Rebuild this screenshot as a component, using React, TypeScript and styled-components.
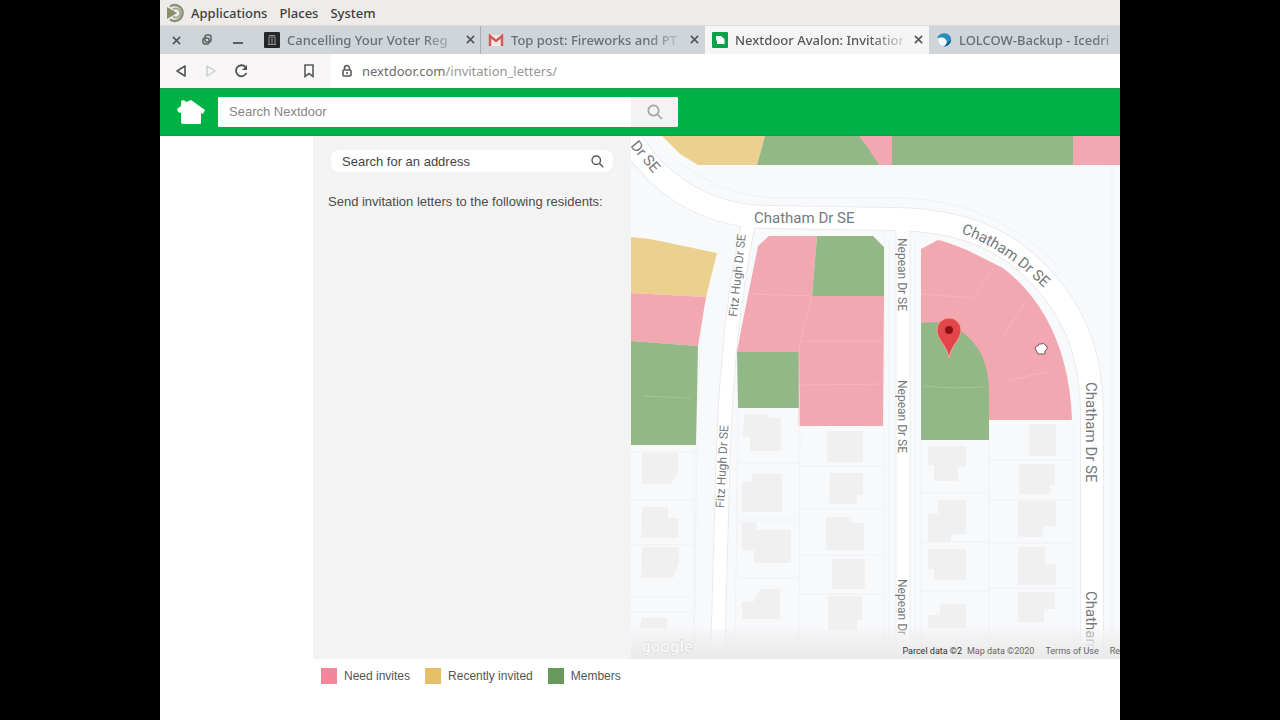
import { useState } from "react";
import styled, { createGlobalStyle } from "styled-components";

const GlobalStyle = createGlobalStyle`
  * {
    box-sizing: border-box;
  }

  body {
    margin: 0;
    background-color: #000;
    font-family: "Liberation Sans", Arial, sans-serif;
  }

  button {
    padding: 0;
    border: 0;
    background: none;
  }
`;

const Screen = styled.div`
  height: 100vh;
  aspect-ratio: 4 / 3;
  max-width: 100%;
  margin: 0 auto;
  overflow: hidden;

  display: flex;
  flex-direction: column;

  background-color: #fff;
`;

const MenuBar = styled.nav`
  height: 26px;
  flex-shrink: 0;
  padding-left: 5px;

  display: flex;
  align-items: center;
  gap: 5px;

  background-color: #edecea;
  border-bottom: 1px solid #dcdcdb;
`;

const MenuButton = styled.button`
  margin-right: 7px;

  color: #3e3e3e;
  font: 500 13px "Noto Sans", sans-serif;
`;

const TabBar = styled.div`
  height: 28px;
  flex-shrink: 0;

  display: flex;

  background-color: #d0d5d9;
`;

const WindowButtons = styled.div`
  width: 97px;
  flex-shrink: 0;
  padding-left: 8px;

  display: flex;
  align-items: center;
  gap: 15px;
`;

const IconButton = styled.button`
  width: 16px;
  height: 16px;
  flex-shrink: 0;

  display: flex;
  align-items: center;
  justify-content: center;
`;

const Tab = styled.div<{ $active?: boolean; $divider?: boolean }>`
  width: 224px;
  flex-shrink: 0;
  padding: 0 2px 1px 7px;

  display: flex;
  align-items: center;
  gap: 7px;

  background-color: ${({ $active }) => ($active ? "#f5f5f6" : "transparent")};
  border-right: 1px solid ${({ $divider }) => ($divider ? "#a9aeb2" : "transparent")};
`;

const TabTitle = styled.button<{ $active?: boolean }>`
  flex: 1;
  min-width: 0;

  color: ${({ $active }) => ($active ? "#55585a" : "#696e72")};
  font: 500 13px "Noto Sans", sans-serif;
  text-align: left;
  white-space: nowrap;

  mask-image: linear-gradient(to right, #000 80%, transparent 105%);
`;

const Toolbar = styled.div`
  height: 34px;
  flex-shrink: 0;
  padding-left: 13px;

  display: flex;
  align-items: center;
  gap: 14px;

  background-color: #f8f6f6;
`;

const BookmarkButton = styled(IconButton)`
  margin-left: 38px;
`;

const AddressBar = styled.div`
  height: 100%;
  flex: 1;
  padding-left: 8px;

  display: flex;
  align-items: center;
  gap: 7px;

  background-color: #fff;
`;

const Url = styled.span`
  color: #969696;
  font: 13px "Noto Sans", sans-serif;
`;

const Host = styled.span`
  color: #6c6c6c;
`;

const SiteHeader = styled.header`
  height: 48px;
  flex-shrink: 0;
  padding: 0 16px 1px;

  display: flex;
  align-items: center;
  gap: 12px;

  background-color: #00b246;
  border-top: 1px solid #1a9f4d;
  border-bottom: 1px solid #109f48;
`;

const HomeLink = styled.a`
  display: flex;
`;

const SiteSearch = styled.form`
  width: 460px;
  height: 30px;

  display: flex;

  background-color: #fff;
  border-radius: 2px;
  overflow: hidden;
`;

const SiteSearchInput = styled.input`
  flex: 1;
  min-width: 0;
  padding: 0 11px;

  border: 0;
  outline: 0;

  font: 13px "Liberation Sans", Arial, sans-serif;

  &::placeholder {
    color: #868686;
  }
`;

const SiteSearchButton = styled.button`
  width: 47px;

  display: flex;
  align-items: center;
  justify-content: center;

  background-color: #f3f3f3;
`;

const Main = styled.main`
  flex: 1;
  min-height: 0;
  margin-left: 153px;

  display: flex;
  flex-direction: column;
`;

const Workspace = styled.div`
  flex: 1;
  min-height: 0;

  display: flex;
`;

const SidePanel = styled.section`
  width: 318px;
  flex-shrink: 0;
  padding: 14px 15px;

  background-color: #f3f3f3;
`;

const AddressSearch = styled.form`
  width: 282px;
  height: 22px;
  margin-left: 3px;
  padding: 0 8px 0 11px;

  display: flex;
  align-items: center;

  background-color: #fff;
  border-radius: 8px;
`;

const AddressInput = styled.input`
  flex: 1;
  min-width: 0;
  padding: 0;

  border: 0;
  outline: 0;
  background: none;

  font: 13px "Liberation Sans", Arial, sans-serif;

  &::placeholder {
    color: #444;
  }
`;

const PanelText = styled.p`
  margin: 22px 0 0;

  color: #4c4c4c;
  font-size: 13px;
  line-height: 16px;
  white-space: nowrap;
`;

const MapPanel = styled.section`
  position: relative;
  flex: 1;
  min-width: 0;
  overflow: hidden;

  background-color: #f8f9fb;
`;

const MapSvg = styled.svg`
  display: block;
  width: 100%;
  height: 100%;
`;

const StreetLabel = styled.text<{ $size: number }>`
  fill: #77797c;
  font-family: Roboto, sans-serif;
  font-size: ${({ $size }) => $size}px;
`;

const Watermark = styled.text`
  fill: #f9f9f9;
  stroke: #d3d3d3;
  stroke-width: 1px;
  paint-order: stroke;
  font: 500 17px Roboto, sans-serif;
`;

const Attribution = styled.div`
  position: absolute;
  right: 0;
  bottom: 0;
  height: 16px;

  display: flex;
  gap: 11px;

  color: #666;
  font: 9px/16px Roboto, sans-serif;
  white-space: nowrap;
`;

const ParcelCredit = styled.span`
  margin-right: -6px;

  color: #333;
`;

const AttributionLink = styled.a`
  color: inherit;
  text-decoration: none;
`;

const Legend = styled.ul`
  height: 61px;
  margin: 0;
  padding: 9px 0 0 8px;

  display: flex;
  gap: 15px;

  list-style: none;
`;

const LegendItem = styled.li`
  height: 16px;

  display: flex;
  align-items: center;
  gap: 7px;

  color: #555;
  font-size: 12px;
`;

const Swatch = styled.span<{ $color: string }>`
  width: 16px;
  height: 16px;

  background-color: ${({ $color }) => $color};
`;

const PINK = "#f2a8b1";
const GREEN = "#93b887";
const YELLOW = "#ebd08f";

const parcels = [
  { fill: YELLOW, points: "662,136 765,136 757,165 698,165 680,154" },
  { fill: PINK, points: "856,136 893,136 893,165 878,165" },
  { fill: GREEN, points: "765,136 859,136 868,148 879,165 757,165" },
  { fill: GREEN, points: "892,136 1073,136 1073,165 892,165" },
  { fill: PINK, points: "1073,136 1140,136 1140,165 1073,165" },
  { fill: YELLOW, points: "631,237 650,239 717,253 706,297 631,293" },
  { fill: PINK, points: "631,293 706,297 698,346 631,341" },
  { fill: GREEN, points: "631,341 698,346 696,445 631,445" },
  { fill: PINK, points: "769,236 817,236 812,296 884,296 883,426 800,426 799,352 737,352 742,325 758,246" },
  { fill: GREEN, points: "817,236 873,236 884,247 884,296 812,296" },
  { fill: GREEN, points: "737,352 799,352 799,408 738,408" },
];

const lotLines = [
  "M752 294L812 296",
  "M812 296L803 330L799 352V426",
  "M803 341H884",
  "M800 385L884 384",
  "M994 268L973 298L922 294",
  "M1025 302L1004 335",
  "M1006 381L1046 372",
];

const borders = [
  "M631 452H700M631 500H700M631 545H695M631 597H692M631 612H692",
  "M697 445L694 660",
  "M703 300L694 460V660",
  "M738 408L735 660M800 426L799 660",
  "M738 463H799M738 520H799M738 578H799M800 466H884M800 509H884M800 555H884M800 594H884",
  "M884 230V660M889 240V660M915 240V660M921 440V660",
  "M989 420V660M1074 420V660M1112 165V660",
  "M921 493H988M921 542H988M921 591H988M989 460H1074M989 500H1074M989 543H1074M989 588H1074",
];

const houses = [
  "M642 453H678V472L670 484H642Z",
  "M642 507H668V518H678V538H641Z",
  "M642 547H679V562L673 578H641Z",
  "M642 618H667V628H640Z",
  "M745 414H769V418H781V451H750V437H742Z",
  "M742 482H752V474H782V512H742Z",
  "M742 522H757V530H791V563H754V550H742Z",
  "M760 589H780V619H742V602H753Z",
  "M827 431H863V462H827Z",
  "M830 473H863V495H857V504H829Z",
  "M826 517H851V523H864V550H826Z",
  "M832 559H865V589H832Z",
  "M828 596H862V620H857V630H828Z",
  "M928 446H966V467H958V481H934V465H928Z",
  "M938 500H966V534H951V542H928V514H938Z",
  "M928 549H966V580H934V569H928Z",
  "M940 604H966V628H928V615H940Z",
  "M1029 424H1056V456H1029Z",
  "M1019 464H1055V485H1050V494H1019Z",
  "M1018 501H1056V526H1043V537H1018Z",
  "M1018 547H1045V564H1056V585H1018Z",
  "M1018 592H1055V609H1044V622H1018Z",
];

const CHATHAM = "M624 128C650 178 700 217 770 217L890 219C975 219 1020 248 1054 292C1081 327 1091 365 1092 410V680";
const FITZ_HUGH = "M749 220C735 290 727 350 723 460L717 680";
const NEPEAN = "M903 220V680";

const roads = [
  { d: FITZ_HUGH, width: 13 },
  { d: NEPEAN, width: 13 },
  { d: CHATHAM, width: 22 },
];

const labels = [
  { text: "Dr SE", size: 15, transform: "translate(630 146) rotate(50)" },
  { text: "Chatham Dr SE", size: 15, transform: "translate(754 223)" },
  { text: "Chatham Dr SE", size: 15, transform: "translate(1086 382) rotate(90)" },
  { text: "Fitz Hugh Dr SE", size: 12, transform: "translate(737 317) rotate(-84)" },
  { text: "Fitz Hugh Dr SE", size: 12, transform: "translate(724 508) rotate(-87)" },
  { text: "Nepean Dr SE", size: 12, transform: "translate(898 238) rotate(90)" },
  { text: "Nepean Dr SE", size: 12, transform: "translate(898 380) rotate(90)" },
  { text: "Nepean Dr", size: 12, transform: "translate(898 579) rotate(90)" },
  { text: "Chatham", size: 15, transform: "translate(1086 591) rotate(90)" },
];

const legend = [
  { label: "Need invites", color: "#f0879b" },
  { label: "Recently invited", color: "#e5c068" },
  { label: "Members", color: "#689a60" },
];

const CloseIcon = () => (
  <svg width="9" height="9" viewBox="0 0 10 10" stroke="#54585b" strokeWidth="1.8">
    <path d="M1 1L9 9M9 1L1 9" />
  </svg>
);

const MateLogo = () => (
  <svg width="21" height="20" viewBox="0 0 21 20" fill="none">
    <path d="M2 4L12 10L2 16Z" fill="#87906a" />
    <path d="M5 3.500A8 8 0 1 1 5 16.500" stroke="#8b9378" strokeWidth="2.400" />
    <path d="M8 6.500A4.500 4.500 0 1 1 8 13.500" stroke="#a0a78d" strokeWidth="2" />
  </svg>
);

const CapitolIcon = () => (
  <svg width="16" height="16" viewBox="0 0 16 16">
    <rect width="16" height="16" rx="1" fill="#24282b" />
    <path d="M4 5H12M5 3.5H11M4 12.5H12M5 6V12M8 6V12M11 6V12" stroke="#8b9093" strokeWidth="1.1" />
  </svg>
);

const GmailIcon = () => (
  <svg width="16" height="16" viewBox="0 0 16 16" fill="none">
    <rect x="1" y="3" width="14" height="11" fill="#eeeaea" />
    <path d="M2 14V4L8 9L14 4V14" stroke="#d65750" strokeWidth="2.4" />
  </svg>
);

const NextdoorIcon = () => (
  <svg width="16" height="16" viewBox="0 0 16 16">
    <rect width="16" height="16" rx="1" fill="#0ba34a" />
    <path d="M4 4H9L12.500 7V12H5V9L4 8Z" fill="#fff" />
  </svg>
);

const IcedriveIcon = () => (
  <svg width="16" height="16" viewBox="0 0 17 16">
    <circle cx="9" cy="8" r="6.5" fill="#f3f9fc" />
    <path d="M1 6C3 0 12-1 15 4C18 9 14 15 8 15C11 13 13 10 10 7C8 5 4 5 1 6Z" fill="#298fb8" />
    <path d="M12 10C15 10 16 8 15.500 6C17 10 14 15 8 15C10 14 12 12 12 10Z" fill="#125e9d" />
  </svg>
);

const HouseLogo = () => (
  <svg width="30" height="26" viewBox="0 0 30 26" fill="#fff">
    <path d="M5 2L8 1L10 3L15 1L29 11L27 15L25 14V24Q25 25 24 25H7Q5 25 5 23V14L2 13L1 10L5 7Z" />
  </svg>
);

const SearchIcon = ({ size, color }: { size: number; color: string }) => (
  <svg width={size} height={size} viewBox="0 0 16 16" fill="none" stroke={color} strokeWidth="1.7">
    <circle cx="6.500" cy="6.500" r="5.200" />
    <path d="M10.500 10.500L15 15" />
  </svg>
);

const tabs = [
  { title: "Cancelling Your Voter Reg", icon: <CapitolIcon />, divider: true },
  { title: "Top post: Fireworks and PT", icon: <GmailIcon /> },
  { title: "Nextdoor Avalon: Invitation", icon: <NextdoorIcon />, active: true },
  { title: "LOLCOW-Backup - Icedri", icon: <IcedriveIcon /> },
];

const NeighborhoodMap = () => (
  <MapPanel aria-label="Neighborhood map">
    <MapSvg viewBox="631 136 489 523" preserveAspectRatio="xMinYMin slice">
      <defs>
        <path id="chathamCurve" d="M961 233Q1006 249 1052 296" />
        <linearGradient id="mapFade" x1="0" y1="0" x2="0" y2="1">
          <stop offset="0" stopColor="#eeeeee" stopOpacity="0.3" />
          <stop offset="0.5" stopColor="#eeeeee" stopOpacity="0.85" />
          <stop offset="1" stopColor="#e9e9e9" />
        </linearGradient>
      </defs>

      {borders.map((d) => (
        <path key={d} d={d} fill="none" stroke="#eff1f4" />
      ))}
      {houses.map((d) => (
        <path key={d} d={d} fill="#f0f0f1" />
      ))}
      <path d="M680 163C710 185 740 197 780 198H885C960 196 1015 222 1060 268" fill="none" stroke="#eff1f4" />

      {roads.map(({ d, width }) => (
        <path key={d} d={d} fill="none" stroke="#e9ebee" strokeWidth={width + 2} />
      ))}
      {roads.map(({ d, width }) => (
        <path key={d} d={d} fill="none" stroke="#fff" strokeWidth={width} />
      ))}

      {parcels.map(({ fill, points }) => (
        <polygon key={points} points={points} fill={fill} />
      ))}
      <path d="M921 249L938 240Q945 241 967 250L1003 268Q1028 287 1045 316Q1070 360 1072 420H989V440H921Z" fill={PINK} />
      <path d="M921 323L937 322L962 332Q988 350 989 390V440H921Z" fill={GREEN} />
      {lotLines.map((d) => (
        <path key={d} d={d} fill="none" stroke="#f5b9c0" strokeOpacity="0.8" />
      ))}
      <path d="M925 386Q950 389 984 387M642 396L690 398" fill="none" stroke="#a6c69a" />

      {labels.map(({ text, size, transform }) => (
        <StreetLabel key={transform} $size={size} transform={transform}>
          {text}
        </StreetLabel>
      ))}
      <StreetLabel $size={15}>
        <textPath href="#chathamCurve">Chatham Dr SE</textPath>
      </StreetLabel>

      <path d="M949 358C947 345 937 340 937 330A12 12 0 0 1 961 330C961 340 951 345 949 358Z" fill="#e2454a" stroke="#f2a18f" />
      <circle cx="949" cy="330" r="4" fill="#8b1116" />
      <path
        d="M1037 352L1035 348Q1036 345 1038 346Q1038 343 1041 344Q1044 342 1045 345Q1048 345 1047 349L1045 351V354H1038Z"
        fill="#fff"
        stroke="#7c5558"
      />

      <rect x="631" y="629" width="900" height="30" fill="url(#mapFade)" />
      <Watermark x="641" y="652">
        google
      </Watermark>
    </MapSvg>
    <Attribution>
      <ParcelCredit>Parcel data ©2</ParcelCredit>
      <span>Map data ©2020</span>
      <AttributionLink href="#terms">Terms of Use</AttributionLink>
      <AttributionLink href="#report">Re</AttributionLink>
    </Attribution>
  </MapPanel>
);

const App = () => {
  const [query, setQuery] = useState("");
  const [address, setAddress] = useState("");

  return (
    <>
      <GlobalStyle />
      <Screen>
        <MenuBar>
          <MateLogo />
          <MenuButton>Applications</MenuButton>
          <MenuButton>Places</MenuButton>
          <MenuButton>System</MenuButton>
        </MenuBar>

        <TabBar>
          <WindowButtons>
            <IconButton aria-label="Close window">
              <CloseIcon />
            </IconButton>
            <IconButton aria-label="Restore window">
              <svg width="12" height="12" viewBox="0 0 12 12" fill="none" stroke="#5b6063" strokeWidth="1.5">
                <rect x="4" y="1" width="6" height="7" rx="2" />
                <rect x="2" y="4" width="6" height="6" rx="2" />
              </svg>
            </IconButton>
            <IconButton aria-label="Minimize window">
              <svg width="12" height="12" viewBox="0 0 12 12" stroke="#5b6063" strokeWidth="2">
                <path d="M1 9H11" />
              </svg>
            </IconButton>
          </WindowButtons>
          {tabs.map(({ title, icon, active, divider }) => (
            <Tab key={title} $active={active} $divider={divider}>
              {icon}
              <TabTitle $active={active}>{title}</TabTitle>
              <IconButton aria-label={`Close ${title}`}>
                <CloseIcon />
              </IconButton>
            </Tab>
          ))}
        </TabBar>

        <Toolbar>
          <IconButton aria-label="Back">
            <svg width="12" height="14" viewBox="0 0 12 14" fill="none" stroke="#555" strokeWidth="1.6" strokeLinejoin="round">
              <path d="M10 2L2 7L10 12Z" />
            </svg>
          </IconButton>
          <IconButton aria-label="Forward">
            <svg width="12" height="14" viewBox="0 0 12 14" fill="none" stroke="#ccc" strokeWidth="1.4" strokeLinejoin="round">
              <path d="M2 2L10 7L2 12Z" />
            </svg>
          </IconButton>
          <IconButton aria-label="Reload">
            <svg width="16" height="16" viewBox="0 0 16 16" fill="none" stroke="#4f4f4f" strokeWidth="1.8">
              <path d="M12.500 4A5.500 5.500 0 1 0 13.500 10" />
              <path d="M14 2V7H9Z" fill="#4f4f4f" stroke="none" />
            </svg>
          </IconButton>
          <BookmarkButton aria-label="Bookmark">
            <svg width="12" height="14" viewBox="0 0 12 14" fill="none" stroke="#5c5c5c" strokeWidth="1.600">
              <path d="M2 1H10V12.500L6 9.500L2 12.500Z" />
            </svg>
          </BookmarkButton>
          <AddressBar>
            <svg width="16" height="14" viewBox="0 0 16 14" fill="none" stroke="#5c5c5c" strokeWidth="1.600">
              <path d="M5.500 6V4A2.500 2.500 0 0 1 10.500 4V6" />
              <rect x="4" y="6" width="8" height="6" rx="1" />
              <path d="M8 8V10" />
            </svg>
            <Url>
              <Host>nextdoor.com</Host>/invitation_letters/
            </Url>
          </AddressBar>
        </Toolbar>

        <SiteHeader>
          <HomeLink href="#home" aria-label="Nextdoor home">
            <HouseLogo />
          </HomeLink>
          <SiteSearch>
            <SiteSearchInput
              aria-label="Search Nextdoor"
              placeholder="Search Nextdoor"
              value={query}
              onChange={(e) => setQuery(e.target.value)}
            />
            <SiteSearchButton type="button" aria-label="Search">
              <SearchIcon size={16} color="#a3a3a8" />
            </SiteSearchButton>
          </SiteSearch>
        </SiteHeader>

        <Main>
          <Workspace>
            <SidePanel>
              <AddressSearch>
                <AddressInput
                  aria-label="Search for an address"
                  placeholder="Search for an address"
                  value={address}
                  onChange={(e) => setAddress(e.target.value)}
                />
                <IconButton type="button" aria-label="Find address">
                  <SearchIcon size={13} color="#555" />
                </IconButton>
              </AddressSearch>
              <PanelText>Send invitation letters to the following residents:</PanelText>
            </SidePanel>
            <NeighborhoodMap />
          </Workspace>
          <Legend>
            {legend.map(({ label, color }) => (
              <LegendItem key={label}>
                <Swatch $color={color} />
                {label}
              </LegendItem>
            ))}
          </Legend>
        </Main>
      </Screen>
    </>
  );
};

export default App;
